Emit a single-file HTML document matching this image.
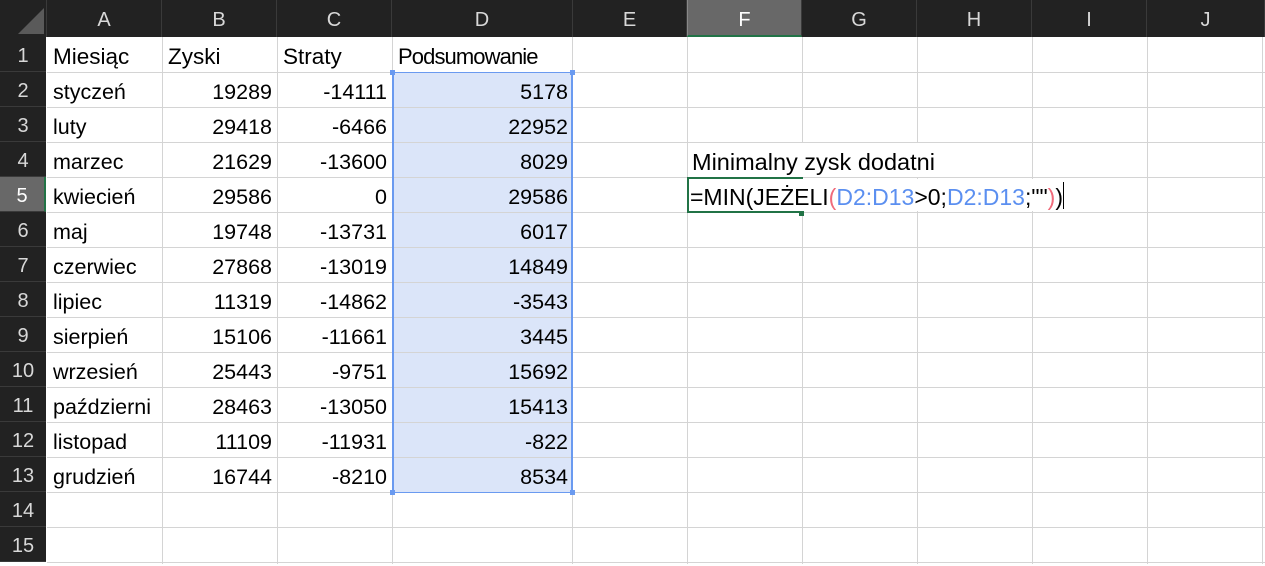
<!DOCTYPE html>
<html><head><meta charset="utf-8"><style>
*{margin:0;padding:0;box-sizing:border-box}
body{width:1265px;height:564px;background:#fff;position:relative;overflow:hidden;font-family:"Liberation Sans",sans-serif;}
.vl{position:absolute;top:37px;width:1px;height:527px;background:#d4d4d4}
.hl{position:absolute;left:47px;height:1px;width:1218px;background:#d4d4d4}
.rh{position:absolute;left:0;width:46px;height:35px;background:#222;color:#d8d8d8;font-size:20px;text-align:center;line-height:39px;border-bottom:1px solid #3a3a3a}
.ch{position:absolute;top:0;height:37px;background:#222;color:#d8d8d8;font-size:20px;text-align:center;line-height:40px;border-right:1px solid #3a3a3a}
.c{position:absolute;height:35px;font-size:21.5px;line-height:40px;color:#000;white-space:nowrap;overflow:hidden}
.l{padding-left:6px}
.r{text-align:right;padding-right:5px}
</style></head><body>
<div class="ch" style="left:0;width:47px"></div>
<svg style="position:absolute;left:18px;top:8px" width="27" height="27"><polygon points="26,0 26,26 0,26" fill="#5a5a5a"/></svg>
<div class="ch" style="left:47px;width:115px">A</div>
<div class="ch" style="left:162px;width:115px">B</div>
<div class="ch" style="left:277px;width:115px">C</div>
<div class="ch" style="left:392px;width:181px">D</div>
<div class="ch" style="left:573px;width:114px">E</div>
<div class="ch" style="left:687px;width:115px;background:#686868;border-left:1px solid #888;border-bottom:2px solid #217346;color:#fff">F</div>
<div class="ch" style="left:802px;width:115px">G</div>
<div class="ch" style="left:917px;width:115px">H</div>
<div class="ch" style="left:1032px;width:115px">I</div>
<div class="ch" style="left:1147px;width:118px">J</div>

<div class="rh" style="top:37px">1</div>
<div class="rh" style="top:72px">2</div>
<div class="rh" style="top:107px">3</div>
<div class="rh" style="top:142px">4</div>
<div class="rh" style="top:177px;background:#686868;color:#fff;border-right:2px solid #217346">5</div>
<div class="rh" style="top:212px">6</div>
<div class="rh" style="top:247px">7</div>
<div class="rh" style="top:282px">8</div>
<div class="rh" style="top:317px">9</div>
<div class="rh" style="top:352px">10</div>
<div class="rh" style="top:387px">11</div>
<div class="rh" style="top:422px">12</div>
<div class="rh" style="top:457px">13</div>
<div class="rh" style="top:492px">14</div>
<div class="rh" style="top:527px">15</div>

<div style="position:absolute;left:393px;top:72px;width:179px;height:420px;background:#dbe5f9"></div>

<div class="vl" style="left:162px"></div><div class="vl" style="left:277px"></div><div class="vl" style="left:392px"></div><div class="vl" style="left:572px"></div><div class="vl" style="left:687px"></div><div class="vl" style="left:802px"></div><div class="vl" style="left:917px"></div><div class="vl" style="left:1032px"></div><div class="vl" style="left:1147px"></div><div class="vl" style="left:1262px"></div>
<div class="hl" style="top:72px"></div><div class="hl" style="top:107px"></div><div class="hl" style="top:142px"></div><div class="hl" style="top:177px"></div><div class="hl" style="top:212px"></div><div class="hl" style="top:247px"></div><div class="hl" style="top:282px"></div><div class="hl" style="top:317px"></div><div class="hl" style="top:352px"></div><div class="hl" style="top:387px"></div><div class="hl" style="top:422px"></div><div class="hl" style="top:457px"></div><div class="hl" style="top:492px"></div><div class="hl" style="top:527px"></div><div class="hl" style="top:562px"></div>

<div style="position:absolute;left:392px;top:72px;width:181px;height:421px;border:2px solid #6a9af0;border-top-width:1px;border-bottom-width:1px"></div>
<div style="position:absolute;left:390px;top:70px;width:5px;height:5px;background:#6a9af0"></div>
<div style="position:absolute;left:570px;top:70px;width:5px;height:5px;background:#6a9af0"></div>
<div style="position:absolute;left:390px;top:490px;width:5px;height:5px;background:#6a9af0"></div>
<div style="position:absolute;left:570px;top:490px;width:5px;height:5px;background:#6a9af0"></div>

<div class="c l" style="left:47px;top:37px;width:115px;font-size:22.5px">Miesiąc</div>
<div class="c l" style="left:162px;top:37px;width:115px;font-size:22.5px">Zyski</div>
<div class="c l" style="left:277px;top:37px;width:115px;font-size:22.5px">Straty</div>
<div class="c l" style="left:392px;top:37px;width:181px;font-size:22px;letter-spacing:-0.9px">Podsumowanie</div>

<div class="c l" style="left:47px;top:72px;width:115px">styczeń</div><div class="c r" style="left:162px;top:72px;width:115px">19289</div><div class="c r" style="left:277px;top:72px;width:115px">-14111</div><div class="c r" style="left:392px;top:72px;width:181px">5178</div>
<div class="c l" style="left:47px;top:107px;width:115px">luty</div><div class="c r" style="left:162px;top:107px;width:115px">29418</div><div class="c r" style="left:277px;top:107px;width:115px">-6466</div><div class="c r" style="left:392px;top:107px;width:181px">22952</div>
<div class="c l" style="left:47px;top:142px;width:115px">marzec</div><div class="c r" style="left:162px;top:142px;width:115px">21629</div><div class="c r" style="left:277px;top:142px;width:115px">-13600</div><div class="c r" style="left:392px;top:142px;width:181px">8029</div>
<div class="c l" style="left:47px;top:177px;width:115px">kwiecień</div><div class="c r" style="left:162px;top:177px;width:115px">29586</div><div class="c r" style="left:277px;top:177px;width:115px">0</div><div class="c r" style="left:392px;top:177px;width:181px">29586</div>
<div class="c l" style="left:47px;top:212px;width:115px">maj</div><div class="c r" style="left:162px;top:212px;width:115px">19748</div><div class="c r" style="left:277px;top:212px;width:115px">-13731</div><div class="c r" style="left:392px;top:212px;width:181px">6017</div>
<div class="c l" style="left:47px;top:247px;width:115px">czerwiec</div><div class="c r" style="left:162px;top:247px;width:115px">27868</div><div class="c r" style="left:277px;top:247px;width:115px">-13019</div><div class="c r" style="left:392px;top:247px;width:181px">14849</div>
<div class="c l" style="left:47px;top:282px;width:115px">lipiec</div><div class="c r" style="left:162px;top:282px;width:115px">11319</div><div class="c r" style="left:277px;top:282px;width:115px">-14862</div><div class="c r" style="left:392px;top:282px;width:181px">-3543</div>
<div class="c l" style="left:47px;top:317px;width:115px">sierpień</div><div class="c r" style="left:162px;top:317px;width:115px">15106</div><div class="c r" style="left:277px;top:317px;width:115px">-11661</div><div class="c r" style="left:392px;top:317px;width:181px">3445</div>
<div class="c l" style="left:47px;top:352px;width:115px">wrzesień</div><div class="c r" style="left:162px;top:352px;width:115px">25443</div><div class="c r" style="left:277px;top:352px;width:115px">-9751</div><div class="c r" style="left:392px;top:352px;width:181px">15692</div>
<div class="c l" style="left:47px;top:387px;width:104px">październik</div><div class="c r" style="left:162px;top:387px;width:115px">28463</div><div class="c r" style="left:277px;top:387px;width:115px">-13050</div><div class="c r" style="left:392px;top:387px;width:181px">15413</div>
<div class="c l" style="left:47px;top:422px;width:115px">listopad</div><div class="c r" style="left:162px;top:422px;width:115px">11109</div><div class="c r" style="left:277px;top:422px;width:115px">-11931</div><div class="c r" style="left:392px;top:422px;width:181px">-822</div>
<div class="c l" style="left:47px;top:457px;width:115px">grudzień</div><div class="c r" style="left:162px;top:457px;width:115px">16744</div><div class="c r" style="left:277px;top:457px;width:115px">-8210</div><div class="c r" style="left:392px;top:457px;width:181px">8534</div>

<div class="c" style="left:688px;top:143px;width:300px;height:34px;background:#fff;line-height:38px;padding-left:4px;font-size:23.5px">Minimalny zysk dodatni</div>
<div style="position:absolute;left:687px;top:177px;width:116px;height:36px;border:2px solid #217346"></div>
<div style="position:absolute;left:689px;top:179px;width:380px;height:32px;background:#fff"></div>
<div class="c" style="left:690px;top:178px;width:380px;line-height:38px;font-size:23px">=MIN(JEŻELI<span style="color:#f06b7b">(</span><span style="color:#5b8ff0">D2:D13</span>&gt;0;<span style="color:#5b8ff0">D2:D13</span>;""<span style="color:#f06b7b">)</span>)</div>
<div style="position:absolute;left:1063px;top:182px;width:1px;height:27px;background:#000"></div>
<div style="position:absolute;left:799px;top:211px;width:5px;height:5px;background:#217346"></div>
</body></html>
